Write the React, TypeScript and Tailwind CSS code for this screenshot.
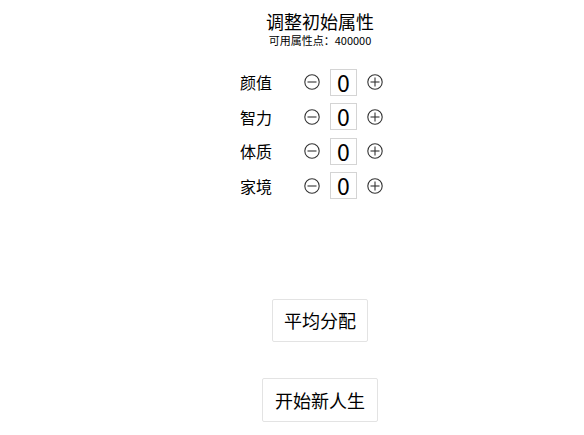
import { useState } from "react";

const FONT = { fontFamily: '"Noto Sans CJK SC", "Noto Sans", sans-serif' };

const attrs = ["颜值", "智力", "体质", "家境"];

const CircleMinus = () => (
  <svg width="16" height="16" viewBox="0 0 16 16" fill="none" stroke="#333" strokeWidth="1.1">
    <circle cx="8" cy="8" r="7.2" />
    <line x1="3.5" y1="8" x2="12.5" y2="8" />
  </svg>
);

const CirclePlus = () => (
  <svg width="16" height="16" viewBox="0 0 16 16" fill="none" stroke="#333" strokeWidth="1.1">
    <circle cx="8" cy="8" r="7.2" />
    <line x1="3.5" y1="8" x2="12.5" y2="8" />
    <line x1="8" y1="3.5" x2="8" y2="12.5" />
  </svg>
);

const App = () => {
  const [values] = useState([0, 0, 0, 0]);

  return (
    <div className="min-h-[435px] w-full bg-white text-black" style={FONT}>
      <div className="flex flex-col items-center pl-[56px]">
        {/* Header */}
        <h1 className="mt-[11px] text-[18px] leading-[20px]">调整初始属性</h1>
        <p className="mt-[2px] text-[11px] leading-[14px]">可用属性点：400000</p>

        {/* Attribute rows */}
        <div className="mt-[18px] ml-[184px] flex flex-col self-start">
          {attrs.map((name, i) => (
            <div key={name} className="flex h-[34.5px] items-center">
              <span className="w-[33px] text-[16px] leading-none">{name}</span>
              <button className="ml-[31px] flex h-[16px] w-[16px] items-center justify-center">
                <CircleMinus />
              </button>
              <div className="ml-[10px] flex h-[27px] w-[27px] items-center justify-center border border-[#d4d4d4] text-[23px] leading-none">
                {values[i]}
              </div>
              <button className="ml-[10px] flex h-[16px] w-[16px] items-center justify-center">
                <CirclePlus />
              </button>
            </div>
          ))}
        </div>

        {/* Actions */}
        <button className="mt-[96px] h-[43px] w-[96px] rounded-[2px] border border-[#e3e3e3] bg-white text-[18px]">
          平均分配
        </button>
        <button className="mt-[36px] h-[44px] w-[116px] rounded-[2px] border border-[#e3e3e3] bg-white text-[18px]">
          开始新人生
        </button>
      </div>
    </div>
  );
};

export default App;
